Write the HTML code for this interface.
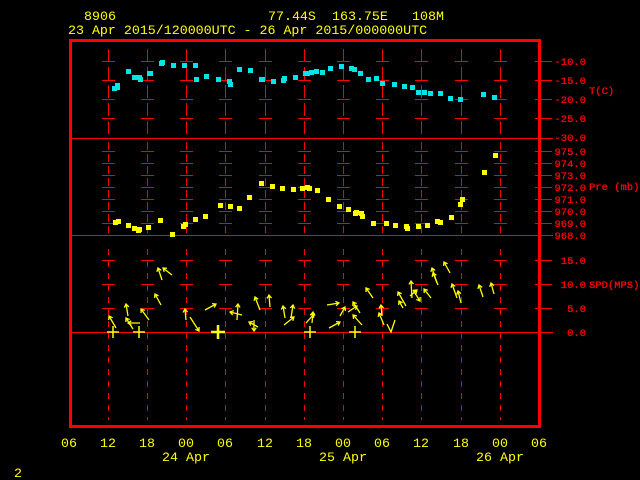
<!DOCTYPE html>
<html><head><meta charset="utf-8"><style>
html,body{margin:0;padding:0;background:#000;width:640px;height:480px;overflow:hidden}
svg{display:block}
text{font-family:"Liberation Mono",monospace}
</style></head><body>
<svg id="s" width="640" height="480" viewBox="0 0 640 480" xmlns="http://www.w3.org/2000/svg">
<rect width="640" height="480" fill="#000"/>
<g fill="#ffff00" font-size="13.3">
<text x="84" y="20">8906</text>
<text x="268" y="20">77.44S</text>
<text x="332" y="20">163.75E</text>
<text x="412" y="20">108M</text>
<text x="68" y="34">23 Apr 2015/120000UTC - 26 Apr 2015/000000UTC</text>
<g text-anchor="middle">
<text x="69" y="447">06</text><text x="108" y="447">12</text><text x="147" y="447">18</text>
<text x="186" y="447">00</text><text x="225" y="447">06</text><text x="265" y="447">12</text>
<text x="304" y="447">18</text><text x="343" y="447">00</text><text x="382" y="447">06</text>
<text x="421" y="447">12</text><text x="461" y="447">18</text><text x="500" y="447">00</text>
<text x="539" y="447">06</text>
<text x="186" y="461">24 Apr</text><text x="343" y="461">25 Apr</text><text x="500" y="461">26 Apr</text>
</g>
<text x="14" y="477">2</text>
</g>
<g fill="#ff0000" font-size="10.5" stroke="#ff0000" stroke-width="0.3">
<g text-anchor="end">
<text x="586" y="65">-10.0</text><text x="586" y="84">-15.0</text><text x="586" y="103">-20.0</text>
<text x="586" y="122">-25.0</text><text x="586" y="141">-30.0</text>
<text x="586" y="155">975.0</text><text x="586" y="167">974.0</text><text x="586" y="179">973.0</text>
<text x="586" y="191">972.0</text><text x="586" y="203">971.0</text><text x="586" y="215">970.0</text>
<text x="586" y="227">969.0</text><text x="586" y="239">968.0</text>
<text x="586" y="264">15.0</text><text x="586" y="288">10.0</text><text x="586" y="312">5.0</text>
<text x="586" y="336">0.0</text>
</g>
<text x="589" y="94">T(C)</text>
<text x="589" y="190">Pre (mb)</text>
<text x="589" y="288">SPD(MPS)</text>
</g>
<g id="grid" fill="#ff0000" shape-rendering="crispEdges"></g>
<g fill="#ff0000" shape-rendering="crispEdges">
<rect x="69" y="39" width="472" height="3"/>
<rect x="69" y="425" width="472" height="3"/>
<rect x="69" y="39" width="3" height="389"/>
<rect x="538" y="39" width="3" height="389"/>
<rect x="70" y="138" width="483" height="1"/>
<rect x="70" y="235" width="483" height="1"/>
<rect x="70" y="332" width="483" height="1"/>
</g>
<g id="pts" shape-rendering="crispEdges"></g>
<g id="arr" stroke="#ffff00" stroke-width="1.3" fill="none"></g>
</svg>
<script>
var NS="http://www.w3.org/2000/svg";
function el(p,t,a){var e=document.createElementNS(NS,t);for(var k in a)e.setAttribute(k,a[k]);p.appendChild(e);return e;}
var g=document.getElementById('grid');
function R(x,y,w,h){el(g,'rect',{x:x,y:y,width:w,height:h});}
var xs=[108,147,186,225,265,304,343,382,421,461,500];
var ty=[61,80,99,118],py=[151,163,175,187,199,211,223],sy=[260,284,308];
function dash(x,y0,y1,on,off){for(var y=y0;y<y1;y+=on+off)R(x,y,1,Math.min(on,y1-y));}
xs.forEach(function(x){
 dash(x,49,136,13,5);
 dash(x,142,233,8,4);
 dash(x,249,420,6,6);
 ty.concat(py,sy).forEach(function(y){R(x-6,y,13,1);});
});
[61,80,99,118,151,163,175,187,199,211,223,260,284,308].forEach(function(y){R(535,y,17,1);});
var p=document.getElementById('pts');
var T=[[114,88],[117,85],[117,87],[128,71],[134,77],[139,77],[140,79],[149,73],[150,73],[161,63],[162,62],[173,65],[184,65],[195,65],[196,79],[206,76],[218,79],[229,81],[230,84],[239,69],[250,70],[261,79],[262,79],[273,81],[283,80],[284,78],[295,77],[305,73],[307,73],[311,72],[316,71],[322,72],[330,68],[341,66],[351,68],[354,69],[360,73],[368,79],[376,78],[382,83],[394,84],[404,86],[412,87],[418,92],[424,92],[430,93],[440,93],[450,98],[460,99],[483,94],[494,97]];
T.forEach(function(a){el(p,'rect',{x:a[0]-2,y:a[1]-2,width:5,height:5,fill:'#00e5e5'});});
var P=[[115,222],[118,221],[128,225],[134,228],[138,230],[139,229],[148,227],[160,220],[172,234],[183,226],[185,224],[195,219],[205,216],[220,205],[230,206],[239,208],[249,197],[261,183],[272,186],[282,188],[293,189],[302,188],[307,187],[309,188],[317,190],[328,199],[339,206],[348,209],[355,213],[356,212],[361,213],[362,216],[373,223],[386,223],[395,225],[406,226],[407,228],[418,226],[427,225],[437,221],[440,222],[451,217],[460,204],[462,199],[484,172],[495,155]];
P.forEach(function(a){el(p,'rect',{x:a[0]-2,y:a[1]-2,width:5,height:5,fill:'#ffff00'});});
var ag=document.getElementById('arr');
var A=[[116,328,109,316],[128,316,126,304],[133,329,126,318],[140,323,128,323],[149,320,141,309],[161,305,155,294],[162,280,158,268],[172,275,163,268],[186,320,185,309],[190,317,199,331],[205,310,216,304],[237,320,238,304],[242,315,230,312],[254,320,254,331],[258,327,249,322],[260,310,255,297],[270,307,269,295],[285,318,283,306],[291,318,293,305],[284,325,294,317],[312,323,313,312],[306,323,314,314],[327,305,339,303],[329,328,340,322],[340,316,345,307],[360,313,353,302],[348,312,357,306],[362,325,353,315],[373,298,366,288],[382,316,381,305],[384,325,379,313],[406,306,398,292],[403,308,399,301],[412,298,411,281],[410,296,417,290],[413,290,420,301],[431,298,424,289],[437,283,432,268],[438,285,433,273],[450,273,444,262],[457,298,452,284],[461,303,458,291],[483,297,479,285],[494,294,491,283]];
A.forEach(function(a){
 var dx=a[2]-a[0],dy=a[3]-a[1],L=Math.sqrt(dx*dx+dy*dy),ux=dx/L,uy=dy/L;
 var d='M'+a[0]+' '+a[1]+'L'+a[2]+' '+a[3];
 var h=4;
 var c=Math.cos(0.6),s=Math.sin(0.6);
 var x1=a[2]-h*(ux*c-uy*s),y1=a[3]-h*(uy*c+ux*s);
 var x2=a[2]-h*(ux*c+uy*s),y2=a[3]-h*(uy*c-ux*s);
 d+='M'+x1+' '+y1+'L'+a[2]+' '+a[3]+'L'+x2+' '+y2;
 el(ag,'path',{d:d});
});
[[113,6,1.5],[139,6,1.5],[218,7,2.5],[310,6,1.5],[355,6,1.5]].forEach(function(c){
 el(ag,'line',{x1:c[0]-c[1],y1:332,x2:c[0]+c[1],y2:332,'stroke-width':c[2]});
 el(ag,'line',{x1:c[0],y1:332-c[1],x2:c[0],y2:332+c[1],'stroke-width':c[2]});
});
el(ag,'path',{d:'M387 324L391 332L395 320'});
</script>
</body></html>
